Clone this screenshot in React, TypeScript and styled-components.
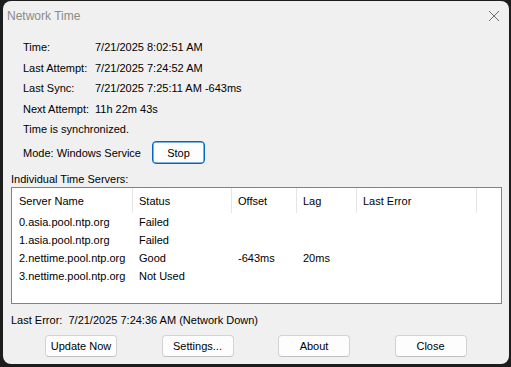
import styled, { createGlobalStyle } from "styled-components";

const GlobalStyle = createGlobalStyle`
  html, body {
    margin: 0;
    padding: 0;
    background: #1d1d1d;
    font-family: "Liberation Sans", Arial, sans-serif;
    font-size: 11px;
    color: #000;
  }
`;

const info = [
  { label: "Time:", value: "7/21/2025 8:02:51 AM" },
  { label: "Last Attempt:", value: "7/21/2025 7:24:52 AM" },
  { label: "Last Sync:", value: "7/21/2025 7:25:11 AM -643ms" },
  { label: "Next Attempt:", value: "11h 22m 43s" },
];

const columns = ["Server Name", "Status", "Offset", "Lag", "Last Error"];

const servers = [
  ["0.asia.pool.ntp.org", "Failed", "", "", ""],
  ["1.asia.pool.ntp.org", "Failed", "", "", ""],
  ["2.nettime.pool.ntp.org", "Good", "-643ms", "20ms", ""],
  ["3.nettime.pool.ntp.org", "Not Used", "", "", ""],
];

export default function App() {
  return (
    <>
      <GlobalStyle />
      <Window>
        <TitleBar>
          <Title>Network Time</Title>
          <CloseIcon viewBox="0 0 12 12">
            <path d="M1 1 L11 11 M11 1 L1 11" stroke="#6f6f6f" strokeWidth="1" />
          </CloseIcon>
        </TitleBar>
        <Body>
          <InfoGrid>
            {info.map((row) => (
              <InfoRow key={row.label}>
                <span>{row.label}</span>
                <span>{row.value}</span>
              </InfoRow>
            ))}
          </InfoGrid>
          <StatusLine>Time is synchronized.</StatusLine>
          <ModeRow>
            <span>Mode: Windows Service</span>
            <Button $primary>Stop</Button>
          </ModeRow>
          <GroupLabel>Individual Time Servers:</GroupLabel>
          <ListBox>
            <HeaderRow>
              {columns.map((c, i) => (
                <HeaderCell key={c} $first={i === 0}>
                  {c}
                </HeaderCell>
              ))}
            </HeaderRow>
            {servers.map((s) => (
              <ListRow key={s[0]}>
                {s.map((v, i) => (
                  <Cell key={i} $first={i === 0}>
                    {v}
                  </Cell>
                ))}
              </ListRow>
            ))}
          </ListBox>
          <LastError>Last Error:&nbsp; 7/21/2025 7:24:36 AM (Network Down)</LastError>
          <ButtonBar>
            <Button>Update Now</Button>
            <Button>Settings...</Button>
            <Button>About</Button>
            <Button>Close</Button>
          </ButtonBar>
        </Body>
      </Window>
    </>
  );
}

const Window = styled.div`
  margin: 1px 2px 0 3px;
  width: 506px;
  height: 363px;
  background: #f0f0f0;
  border-radius: 8px;
  box-sizing: border-box;
  display: flex;
  flex-direction: column;
  overflow: hidden;
`;

const TitleBar = styled.div`
  height: 29px;
  display: flex;
  align-items: center;
  justify-content: space-between;
  padding: 0 9px 0 4px;
`;

const Title = styled.div`
  font-size: 12px;
  color: #8a8a8a;
  margin-top: 1px;
`;

const CloseIcon = styled.svg`
  width: 12px;
  height: 12px;
  margin-top: 1px;
`;

const Body = styled.div`
  display: flex;
  flex-direction: column;
  padding: 7px 7px 0 8px;
`;

const InfoGrid = styled.div`
  display: flex;
  flex-direction: column;
  padding-left: 12px;
`;

const InfoRow = styled.div`
  display: grid;
  grid-template-columns: 72px auto;
  height: 20.5px;
  align-items: center;
`;

const StatusLine = styled.div`
  padding-left: 12px;
  height: 20.5px;
  display: flex;
  align-items: center;
`;

const ModeRow = styled.div`
  display: flex;
  align-items: center;
  gap: 11px;
  padding-left: 12px;
  margin-top: 1.5px;
  height: 23px;
`;

const Button = styled.button<{ $primary?: boolean }>`
  font-family: "Liberation Sans", Arial, sans-serif;
  font-size: 11px;
  color: #000;
  width: ${(p) => (p.$primary ? "53px" : "72px")};
  height: ${(p) => (p.$primary ? "23px" : "22px")};
  padding: 0;
  border-radius: 4px;
  background: #fdfdfd;
  border: 1px solid ${(p) => (p.$primary ? "#0067c0" : "#d3d3d3")};
  border-bottom-color: ${(p) => (p.$primary ? "#0067c0" : "#c0c0c0")};
  box-shadow: ${(p) => (p.$primary ? "inset 0 0 0 0.5px #0067c0" : "none")};
`;

const GroupLabel = styled.div`
  margin-top: 6px;
  height: 17px;
  display: flex;
  align-items: center;
`;

const ListBox = styled.div`
  height: 117px;
  box-sizing: border-box;
  background: #fff;
  border: 1px solid #828282;
  display: flex;
  flex-direction: column;
`;

const HeaderRow = styled.div`
  display: grid;
  grid-template-columns: 121px 99px 65px 60px 120px;
  height: 25px;
  align-items: stretch;
`;

const HeaderCell = styled.div<{ $first?: boolean }>`
  display: flex;
  align-items: center;
  padding-left: ${(p) => (p.$first ? "7px" : "6px")};
  border-right: 1px solid #e5e5e5;
`;

const ListRow = styled.div`
  display: grid;
  grid-template-columns: 121px 99px 65px 60px 120px;
  height: 18px;
  align-items: center;
`;

const Cell = styled.div<{ $first?: boolean }>`
  padding-left: ${(p) => (p.$first ? "7px" : "6px")};
  white-space: nowrap;
`;

const LastError = styled.div`
  margin-top: 7px;
  height: 17px;
  display: flex;
  align-items: center;
`;

const ButtonBar = styled.div`
  display: flex;
  gap: 44.5px;
  padding-left: 34px;
  margin-top: 7px;
`;
